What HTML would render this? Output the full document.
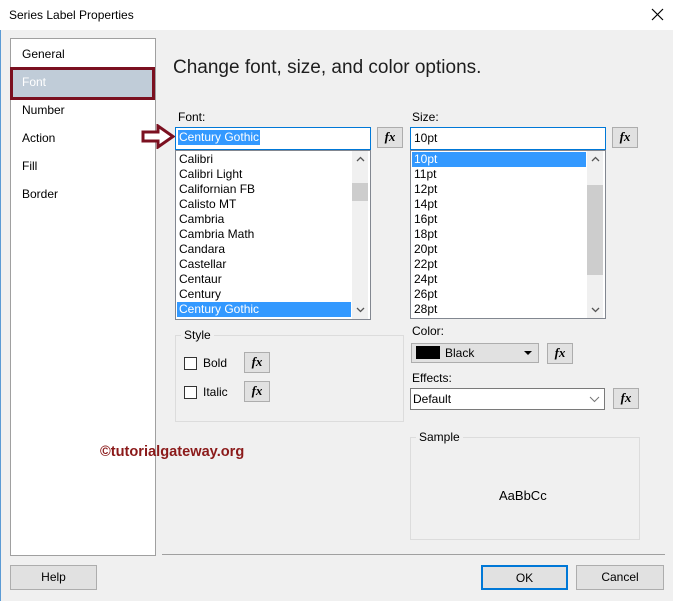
<!DOCTYPE html>
<html><head><style>
*{box-sizing:border-box;margin:0;padding:0}
body{width:673px;height:601px;background:#f0f0f0;font-family:"Liberation Sans",sans-serif;font-size:12px;color:#000;position:relative;overflow:hidden}
.a{position:absolute}
.box{position:absolute;background:#fff;border:1px solid #828790}
.fx{position:absolute;width:26px;height:21px;background:#e1e1e1;border:1px solid #adadad;font:italic bold 13px "Liberation Serif",serif;text-align:center;line-height:18px}
.li{position:absolute;left:3px;height:15px;line-height:15px;font-size:12px}
.btn{position:absolute;height:25px;background:#e1e1e1;border:1px solid #adadad;text-align:center;line-height:23px}
.sb{position:absolute;width:16px;background:#f0f0f0}
.cb{position:absolute;width:13px;height:13px;border:1px solid #333;background:#fff}
</style></head><body>
<div class="a" style="left:0;top:0;width:673px;height:30px;background:#fff"></div>
<div class="a" style="left:9px;top:8px;font-size:12px">Series Label Properties</div>
<svg class="a" style="left:651px;top:8px" width="13" height="13"><path d="M1 1L12 12M12 1L1 12" stroke="#000" stroke-width="1.2"/></svg>
<div class="a" style="left:0;top:30px;width:1px;height:571px;background:#5b9bd5"></div>

<div class="box" style="left:10px;top:38px;width:146px;height:518px;border-color:#a0a0a0"></div>
<div class="a" style="left:10px;top:67px;width:145px;height:33px;background:#c0ccd8;border:3px solid #7b1020"></div>
<div class="a" style="left:22px;top:47px">General</div>
<div class="a" style="left:22px;top:75px;color:#fff">Font</div>
<div class="a" style="left:22px;top:103px">Number</div>
<div class="a" style="left:22px;top:131px">Action</div>
<div class="a" style="left:22px;top:159px">Fill</div>
<div class="a" style="left:22px;top:187px">Border</div>

<div class="a" style="left:173px;top:57px;font-size:19px;color:#1e1e1e">Change font, size, and color options.</div>

<div class="a" style="left:178px;top:110px">Font:</div>
<svg class="a" style="left:141px;top:124px" width="36" height="25"><path d="M2 8H17V2L32 12.5L17 23V17H2Z" fill="#fff" stroke="#7b1020" stroke-width="3"/></svg>
<div class="box" style="left:175px;top:127px;width:196px;height:23px;border-color:#0078d7"></div>
<div class="a" style="left:178px;top:130px;background:#3399ff;color:#fff;height:15px;line-height:15px;padding:0 1px">Century Gothic</div>
<div class="fx" style="left:377px;top:127px">fx</div>
<div class="box" style="left:175px;top:150px;width:196px;height:170px">
<div class="sb" style="left:176px;top:0;height:168px"></div>
<div class="sb" style="left:176px;top:32px;height:18px;background:#cdcdcd"></div>
<svg class="a" style="left:180px;top:5px" width="9" height="6"><path d="M1 5L4.5 1.5L8 5" stroke="#555" fill="none" stroke-width="1.3"/></svg>
<svg class="a" style="left:180px;top:156px" width="9" height="6"><path d="M1 1L4.5 4.5L8 1" stroke="#555" fill="none" stroke-width="1.3"/></svg>
<div class="li" style="top:1px">Calibri</div><div class="li" style="top:16px">Calibri Light</div><div class="li" style="top:31px">Californian FB</div><div class="li" style="top:46px">Calisto MT</div><div class="li" style="top:61px">Cambria</div><div class="li" style="top:76px">Cambria Math</div><div class="li" style="top:91px">Candara</div><div class="li" style="top:106px">Castellar</div><div class="li" style="top:121px">Centaur</div><div class="li" style="top:136px">Century</div>
<div class="li" style="top:151px;left:1px;width:174px;background:#3399ff;color:#fff;padding-left:2px">Century Gothic</div>
</div>

<div class="a" style="left:412px;top:110px">Size:</div>
<div class="box" style="left:410px;top:127px;width:196px;height:23px;border-color:#0078d7"></div>
<div class="a" style="left:414px;top:131px">10pt</div>
<div class="fx" style="left:612px;top:127px">fx</div>
<div class="box" style="left:410px;top:150px;width:196px;height:169px">
<div class="sb" style="left:176px;top:0;height:167px"></div>
<div class="sb" style="left:176px;top:34px;height:90px;background:#cdcdcd"></div>
<svg class="a" style="left:180px;top:5px" width="9" height="6"><path d="M1 5L4.5 1.5L8 5" stroke="#555" fill="none" stroke-width="1.3"/></svg>
<svg class="a" style="left:180px;top:156px" width="9" height="6"><path d="M1 1L4.5 4.5L8 1" stroke="#555" fill="none" stroke-width="1.3"/></svg>
<div class="li" style="top:1px;left:1px;width:174px;background:#3399ff;color:#fff;padding-left:2px">10pt</div>
<div class="li" style="top:16px">11pt</div><div class="li" style="top:31px">12pt</div><div class="li" style="top:46px">14pt</div><div class="li" style="top:61px">16pt</div><div class="li" style="top:76px">18pt</div><div class="li" style="top:91px">20pt</div><div class="li" style="top:106px">22pt</div><div class="li" style="top:121px">24pt</div><div class="li" style="top:136px">26pt</div><div class="li" style="top:151px">28pt</div>
</div>

<div class="a" style="left:175px;top:335px;width:229px;height:87px;border:1px solid #dcdcdc"></div>
<div class="a" style="left:181px;top:328px;background:#f0f0f0;padding:0 3px">Style</div>
<div class="cb" style="left:184px;top:357px"></div><div class="a" style="left:203px;top:356px">Bold</div>
<div class="fx" style="left:244px;top:352px">fx</div>
<div class="cb" style="left:184px;top:386px"></div><div class="a" style="left:203px;top:385px">Italic</div>
<div class="fx" style="left:244px;top:381px">fx</div>

<div class="a" style="left:412px;top:324px">Color:</div>
<div class="a" style="left:411px;top:343px;width:128px;height:20px;background:#e1e1e1;border:1px solid #adadad"></div>
<div class="a" style="left:416px;top:346px;width:24px;height:13px;background:#000"></div>
<div class="a" style="left:445px;top:346px">Black</div>
<div class="a" style="left:524px;top:351px;border:4px solid transparent;border-top:4px solid #000"></div>
<div class="fx" style="left:547px;top:343px">fx</div>

<div class="a" style="left:412px;top:371px">Effects:</div>
<div class="box" style="left:410px;top:388px;width:195px;height:22px;border-color:#7a7a7a"></div>
<div class="a" style="left:413px;top:392px">Default</div>
<svg class="a" style="left:589px;top:396px" width="11" height="7"><path d="M1 1L5.5 5.5L10 1" stroke="#777" fill="none" stroke-width="1"/></svg>
<div class="fx" style="left:613px;top:388px">fx</div>

<div class="a" style="left:410px;top:437px;width:230px;height:103px;border:1px solid #dcdcdc"></div>
<div class="a" style="left:416px;top:430px;background:#f0f0f0;padding:0 3px">Sample</div>
<div class="a" style="left:499px;top:488px;font-size:13px">AaBbCc</div>

<div class="a" style="left:100px;top:444px;color:#8b1a1a;font-weight:bold;font-size:14.6px">©tutorialgateway.org</div>

<div class="a" style="left:162px;top:554px;width:503px;height:1px;background:#a0a0a0"></div>
<div class="btn" style="left:10px;top:565px;width:87px">Help</div>
<div class="btn" style="left:481px;top:565px;width:87px;border:2px solid #0078d7">OK</div>
<div class="btn" style="left:576px;top:565px;width:88px">Cancel</div>
</body></html>
